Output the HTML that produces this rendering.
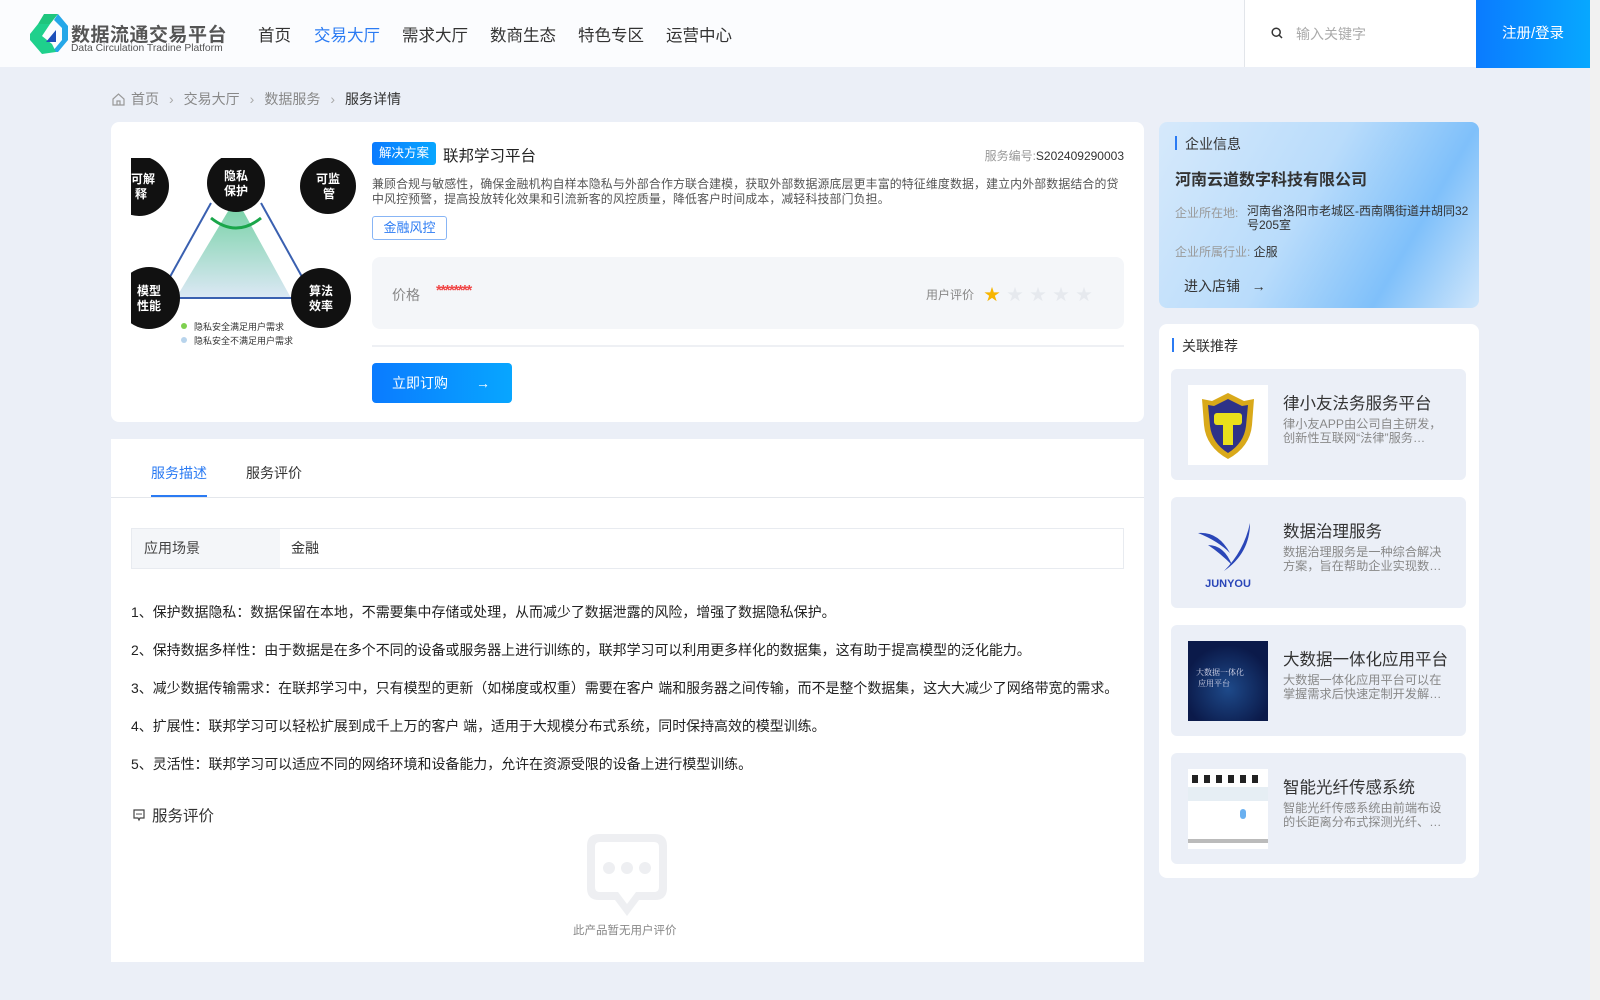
<!DOCTYPE html>
<html><head><meta charset="utf-8">
<style>
*{box-sizing:border-box;margin:0;padding:0}
body{width:1600px;height:1000px;overflow:hidden;background:#ebeff7;font-family:"Liberation Sans","Noto Sans CJK SC",sans-serif;color:#333;position:relative}
.abs{position:absolute}
.hdr{left:0;top:0;width:1590px;height:67px;background:#fbfcfe}
.nav{top:22px;font-size:16.5px;color:#333}
.sb{right:0;top:0;width:10px;height:1000px;background:#f1f1f1}
.card{background:#fff;border-radius:8px}
.bc{top:89px;font-size:14px;color:#888}
.p{left:131px;font-size:13.95px;color:#222}
.ri{left:1171px;width:295px;height:111px;background:#ebeff7;border-radius:6px}
.ri .th{position:absolute;left:17px;top:16px;width:80px;height:80px;background:#fff}
.ri .t{position:absolute;left:112px;top:21px;font-size:16.5px;color:#333}
.ri .d{position:absolute;left:112px;top:48px;width:160px;font-size:12.2px;color:#888;line-height:14px}
</style></head><body>
<div class="abs hdr"></div>
<svg class="abs" style="left:30px;top:14px" width="38" height="40" viewBox="0 0 38 40">
<polygon points="14,0 28,0 20,10 8,10" fill="#1ec57d"/>
<polygon points="28,0 38,12 38,26 28,38 22,38 32,26 32,14 24,6" fill="#25a7e8"/>
<polygon points="8,10 20,10 12,22 22,30 26,38 12,40 0,26 0,20" fill="#1fd08c"/>
<polygon points="16,28 26,16 26,28" fill="#1c4fb8"/>
</svg>
<div class="abs" style="left:71px;top:20px;font-size:19px;font-weight:bold;color:#555;letter-spacing:0.5px">数据流通交易平台</div>
<div class="abs" style="left:71px;top:43px;font-size:10.3px;color:#555">Data Circulation Tradine Platform</div>
<div class="abs nav" style="left:258px">首页</div>
<div class="abs nav" style="left:314px;color:#2b7bf3">交易大厅</div>
<div class="abs nav" style="left:402px">需求大厅</div>
<div class="abs nav" style="left:490px">数商生态</div>
<div class="abs nav" style="left:578px">特色专区</div>
<div class="abs nav" style="left:666px">运营中心</div>
<div class="abs" style="left:1244px;top:0;width:232px;height:67px;background:#fff;border-left:1px solid #e2e5ea"></div>
<svg class="abs" style="left:1271px;top:27px" width="12" height="12" viewBox="0 0 12 12"><circle cx="5.2" cy="5.2" r="4" fill="none" stroke="#333" stroke-width="1.5"/><line x1="8" y1="8" x2="11" y2="11" stroke="#333" stroke-width="1.5"/></svg>
<div class="abs" style="left:1296px;top:24px;font-size:14px;color:#aaa">输入关键字</div>
<div class="abs" style="left:1476px;top:0;width:114px;height:68px;background:linear-gradient(90deg,#0a7bff,#07a8ff);color:#fff;font-size:14.5px;text-align:center;line-height:69px">注册/登录</div>
<div class="abs sb"></div>

<svg class="abs" style="left:111px;top:92px" width="15" height="15" viewBox="0 0 15 15"><path d="M2 7 L7.5 2 L13 7 V13 H2 Z M6 13 V9 H9 V13" fill="none" stroke="#999" stroke-width="1.2"/></svg>
<div class="abs bc" style="left:131px">首页<span style="color:#aaa;margin:0 10px">›</span>交易大厅<span style="color:#aaa;margin:0 10px">›</span>数据服务<span style="color:#aaa;margin:0 10px">›</span><span style="color:#333">服务详情</span></div>

<div class="abs card" style="left:111px;top:122px;width:1033px;height:300px"></div>
<svg class="abs" style="left:131px;top:158px" width="226" height="200" viewBox="0 0 226 200">
<defs><linearGradient id="g" x1="0" y1="0" x2="0" y2="1"><stop offset="0" stop-color="#6fd0a0"/><stop offset="1" stop-color="#dce8f5"/></linearGradient></defs>
<polygon points="105,40 160,140 45,140" fill="url(#g)"/>
<path d="M80 60 Q105 80 130 60" stroke="#1aa64a" stroke-width="3" fill="none"/>
<line x1="40" y1="140" x2="170" y2="140" stroke="#3a60b0" stroke-width="2"/>
<line x1="80" y1="45" x2="30" y2="135" stroke="#3a60b0" stroke-width="2"/>
<line x1="130" y1="45" x2="180" y2="135" stroke="#3a60b0" stroke-width="2"/>
<circle cx="105" cy="25" r="29" fill="#111"/><circle cx="197" cy="28" r="28" fill="#111"/><circle cx="8" cy="28" r="30" fill="#111"/>
<circle cx="18" cy="140" r="31" fill="#111"/><circle cx="190" cy="140" r="30" fill="#111"/>
<g fill="#fff" font-size="12" font-weight="bold" font-family="Noto Sans CJK SC"><text x="93" y="22">隐私</text><text x="93" y="37">保护</text><text x="185" y="25">可监</text><text x="192" y="40">管</text><text x="0" y="25">可解</text><text x="4" y="40">释</text><text x="6" y="137">模型</text><text x="6" y="152">性能</text><text x="178" y="137">算法</text><text x="178" y="152">效率</text></g>
<circle cx="53" cy="168" r="3" fill="#7ed04f"/><circle cx="53" cy="182" r="3" fill="#b8d4ec"/>
<text x="63" y="172" font-size="9" fill="#333" font-family="Noto Sans CJK SC">隐私安全满足用户需求</text>
<text x="63" y="186" font-size="9" fill="#333" font-family="Noto Sans CJK SC">隐私安全不满足用户需求</text>
</svg>
<div class="abs" style="left:372px;top:142px;width:64px;height:23px;background:linear-gradient(90deg,#0a7bff,#08a6ff);border-radius:3px;color:#fff;font-size:12.5px;text-align:center;line-height:23px">解决方案</div>
<div class="abs" style="left:443px;top:144px;font-size:15.5px;color:#222">联邦学习平台</div>
<div class="abs" style="left:960px;top:147px;width:164px;text-align:right;font-size:12px;color:#999">服务编号:<span style="color:#333">S202409290003</span></div>
<div class="abs" style="left:372px;top:177px;width:754px;font-size:11.9px;letter-spacing:0.15px;color:#555;line-height:15px">兼顾合规与敏感性，确保金融机构自样本隐私与外部合作方联合建模，获取外部数据源底层更丰富的特征维度数据，建立内外部数据结合的贷中风控预警，提高投放转化效果和引流新客的风控质量，降低客户时间成本，减轻科技部门负担。</div>
<div class="abs" style="left:372px;top:216px;width:75px;height:24px;border:1px solid #88b5f5;border-radius:3px;color:#2b7bf3;font-size:13px;text-align:center;line-height:22px">金融风控</div>
<div class="abs" style="left:372px;top:257px;width:752px;height:72px;background:#f4f6f9;border-radius:8px"></div>
<div class="abs" style="left:392px;top:285px;font-size:14px;color:#888">价格</div>
<div class="abs" style="left:436px;top:282px;font-size:15px;font-weight:bold;color:#f04848;letter-spacing:-1.5px">********</div>
<div class="abs" style="left:926px;top:286px;font-size:12px;color:#888">用户评价</div>
<div class="abs" style="left:984px;top:281px;font-size:16px;color:#e6e9ee;letter-spacing:7px"><span style="color:#f7b500">★</span>★★★★</div>
<div class="abs" style="left:372px;top:345px;width:752px;height:2px;background:#eef0f4"></div>
<div class="abs" style="left:372px;top:363px;width:140px;height:40px;background:linear-gradient(90deg,#0a7bff,#08a6ff);border-radius:4px;color:#fff;font-size:14px;line-height:40px;padding-left:20px">立即订购<span style="position:absolute;left:104px">→</span></div>

<div class="abs" style="left:111px;top:439px;width:1033px;height:523px;background:#fff"></div>
<div class="abs" style="left:151px;top:463px;font-size:14px;color:#2b7bf3">服务描述</div>
<div class="abs" style="left:246px;top:463px;font-size:14px;color:#333">服务评价</div>
<div class="abs" style="left:111px;top:497px;width:1033px;height:1px;background:#e4e7ec"></div>
<div class="abs" style="left:151px;top:495px;width:56px;height:2px;background:#2b7bf3"></div>
<div class="abs" style="left:131px;top:528px;width:993px;height:41px;border:1px solid #e8ebf0"></div>
<div class="abs" style="left:132px;top:529px;width:148px;height:39px;background:#f4f6f9;font-size:14px;color:#444;line-height:39px;padding-left:12px">应用场景</div>
<div class="abs" style="left:291px;top:529px;font-size:14px;color:#333;line-height:39px">金融</div>
<div class="abs p" style="top:602px">1、保护数据隐私：数据保留在本地，不需要集中存储或处理，从而减少了数据泄露的风险，增强了数据隐私保护。</div>
<div class="abs p" style="top:640px">2、保持数据多样性：由于数据是在多个不同的设备或服务器上进行训练的，联邦学习可以利用更多样化的数据集，这有助于提高模型的泛化能力。</div>
<div class="abs p" style="top:678px">3、减少数据传输需求：在联邦学习中，只有模型的更新（如梯度或权重）需要在客户 端和服务器之间传输，而不是整个数据集，这大大减少了网络带宽的需求。</div>
<div class="abs p" style="top:716px">4、扩展性：联邦学习可以轻松扩展到成千上万的客户 端，适用于大规模分布式系统，同时保持高效的模型训练。</div>
<div class="abs p" style="top:754px">5、灵活性：联邦学习可以适应不同的网络环境和设备能力，允许在资源受限的设备上进行模型训练。</div>
<svg class="abs" style="left:132px;top:808px" width="14" height="14" viewBox="0 0 14 14"><path d="M2 2 H12 V10 H8 L7 12 L6 10 H2 Z" fill="none" stroke="#444" stroke-width="1.2"/><circle cx="5" cy="6" r=".8" fill="#444"/><circle cx="7" cy="6" r=".8" fill="#444"/><circle cx="9" cy="6" r=".8" fill="#444"/></svg>
<div class="abs" style="left:152px;top:804px;font-size:15.5px;color:#333">服务评价</div>
<svg class="abs" style="left:585px;top:832px" width="84" height="88" viewBox="0 0 84 88"><path d="M14 2 H70 Q82 2 82 14 V56 Q82 68 70 68 H54 L42 84 L30 68 H14 Q2 68 2 56 V14 Q2 2 14 2 Z M15 10 Q10 10 10 15 V55 Q10 60 15 60 H33 L42 72 L51 60 H69 Q74 60 74 55 V15 Q74 10 69 10 Z" fill="#eeeff2" fill-rule="evenodd"/><circle cx="24" cy="36" r="6" fill="#eeeff2"/><circle cx="42" cy="36" r="6" fill="#eeeff2"/><circle cx="60" cy="36" r="6" fill="#eeeff2"/></svg>
<div class="abs" style="left:573px;top:922px;font-size:11.5px;color:#888">此产品暂无用户评价</div>

<div class="abs" style="left:1159px;top:122px;width:320px;height:186px;border-radius:8px;background:linear-gradient(120deg,#d6e9fb 0%,#b9dcfb 45%,#7fc0fa 75%,#cfe6fb 100%)"></div>
<div class="abs" style="left:1175px;top:136px;width:2px;height:14px;background:#2b7bf3"></div>
<div class="abs" style="left:1185px;top:134px;font-size:14px;color:#333">企业信息</div>
<div class="abs" style="left:1175px;top:166px;font-size:16px;font-weight:bold;color:#333">河南云道数字科技有限公司</div>
<div class="abs" style="left:1175px;top:204px;font-size:12px;color:#999">企业所在地:</div>
<div class="abs" style="left:1247px;top:204px;width:224px;font-size:12px;color:#333;line-height:14px">河南省洛阳市老城区-西南隅街道井胡同32号205室</div>
<div class="abs" style="left:1175px;top:243px;font-size:12px;color:#999">企业所属行业: <span style="color:#333">企服</span></div>
<div class="abs" style="left:1184px;top:276px;font-size:14px;color:#333">进入店铺 &nbsp;&nbsp;→</div>

<div class="abs card" style="left:1159px;top:324px;width:320px;height:554px"></div>
<div class="abs" style="left:1172px;top:338px;width:2px;height:14px;background:#2b7bf3"></div>
<div class="abs" style="left:1182px;top:336px;font-size:14px;color:#333">关联推荐</div>

<div class="abs ri" style="top:369px"><div class="th"><svg width="80" height="80" viewBox="0 0 80 80"><path d="M40 8 L56 16 L66 14 L64 40 Q62 62 40 74 Q18 62 16 40 L14 14 L24 16 Z" fill="#d9a91a"/><path d="M40 14 L54 21 L60 20 L58 41 Q56 58 40 68 Q24 58 22 41 L20 20 L26 21 Z" fill="#2e3288"/><rect x="26" y="28" width="28" height="12" rx="3" fill="#e9e01a"/><rect x="35" y="40" width="10" height="20" fill="#e9e01a"/></svg></div><div class="t">律小友法务服务平台</div><div class="d">律小友APP由公司自主研发，创新性互联网“法律”服务…</div></div>
<div class="abs ri" style="top:497px"><div class="th" style="background:transparent"><svg width="80" height="80" viewBox="0 0 80 80"><path d="M10 20 Q30 18 42 40 Q30 28 10 20 Z M20 32 Q36 32 44 52 Q32 40 20 32 Z" fill="#2a46b8"/><path d="M62 10 Q62 40 36 58 Q56 38 62 10 Z" fill="#2a46b8"/><text x="40" y="74" text-anchor="middle" font-size="11" font-weight="bold" fill="#2a46b8" font-family="Liberation Sans">JUNYOU</text></svg></div><div class="t">数据治理服务</div><div class="d">数据治理服务是一种综合解决方案，旨在帮助企业实现数…</div></div>
<div class="abs ri" style="top:625px"><div class="th" style="background:radial-gradient(circle at 50% 60%,#1e4a8a,#0b1a4a 70%)"><div style="position:absolute;left:8px;top:26px;color:#dde;font-size:8px;line-height:11px;font-family:'Noto Serif CJK SC',serif">大数据一体化<br>&nbsp;应用平台</div></div><div class="t">大数据一体化应用平台</div><div class="d">大数据一体化应用平台可以在掌握需求后快速定制开发解…</div></div>
<div class="abs ri" style="top:753px"><div class="th"><div style="position:absolute;left:4px;top:6px;width:72px;height:8px;background:repeating-linear-gradient(90deg,#222 0 6px,#fff 6px 12px)"></div><div style="position:absolute;left:0;top:18px;width:80px;height:14px;background:#e6eef4"></div><div style="position:absolute;left:52px;top:40px;width:6px;height:10px;background:#6ab0f0;border-radius:3px"></div><div style="position:absolute;left:0;top:70px;width:80px;height:4px;background:#bbb"></div></div><div class="t">智能光纤传感系统</div><div class="d">智能光纤传感系统由前端布设的长距离分布式探测光纤、…</div></div>
</body></html>
